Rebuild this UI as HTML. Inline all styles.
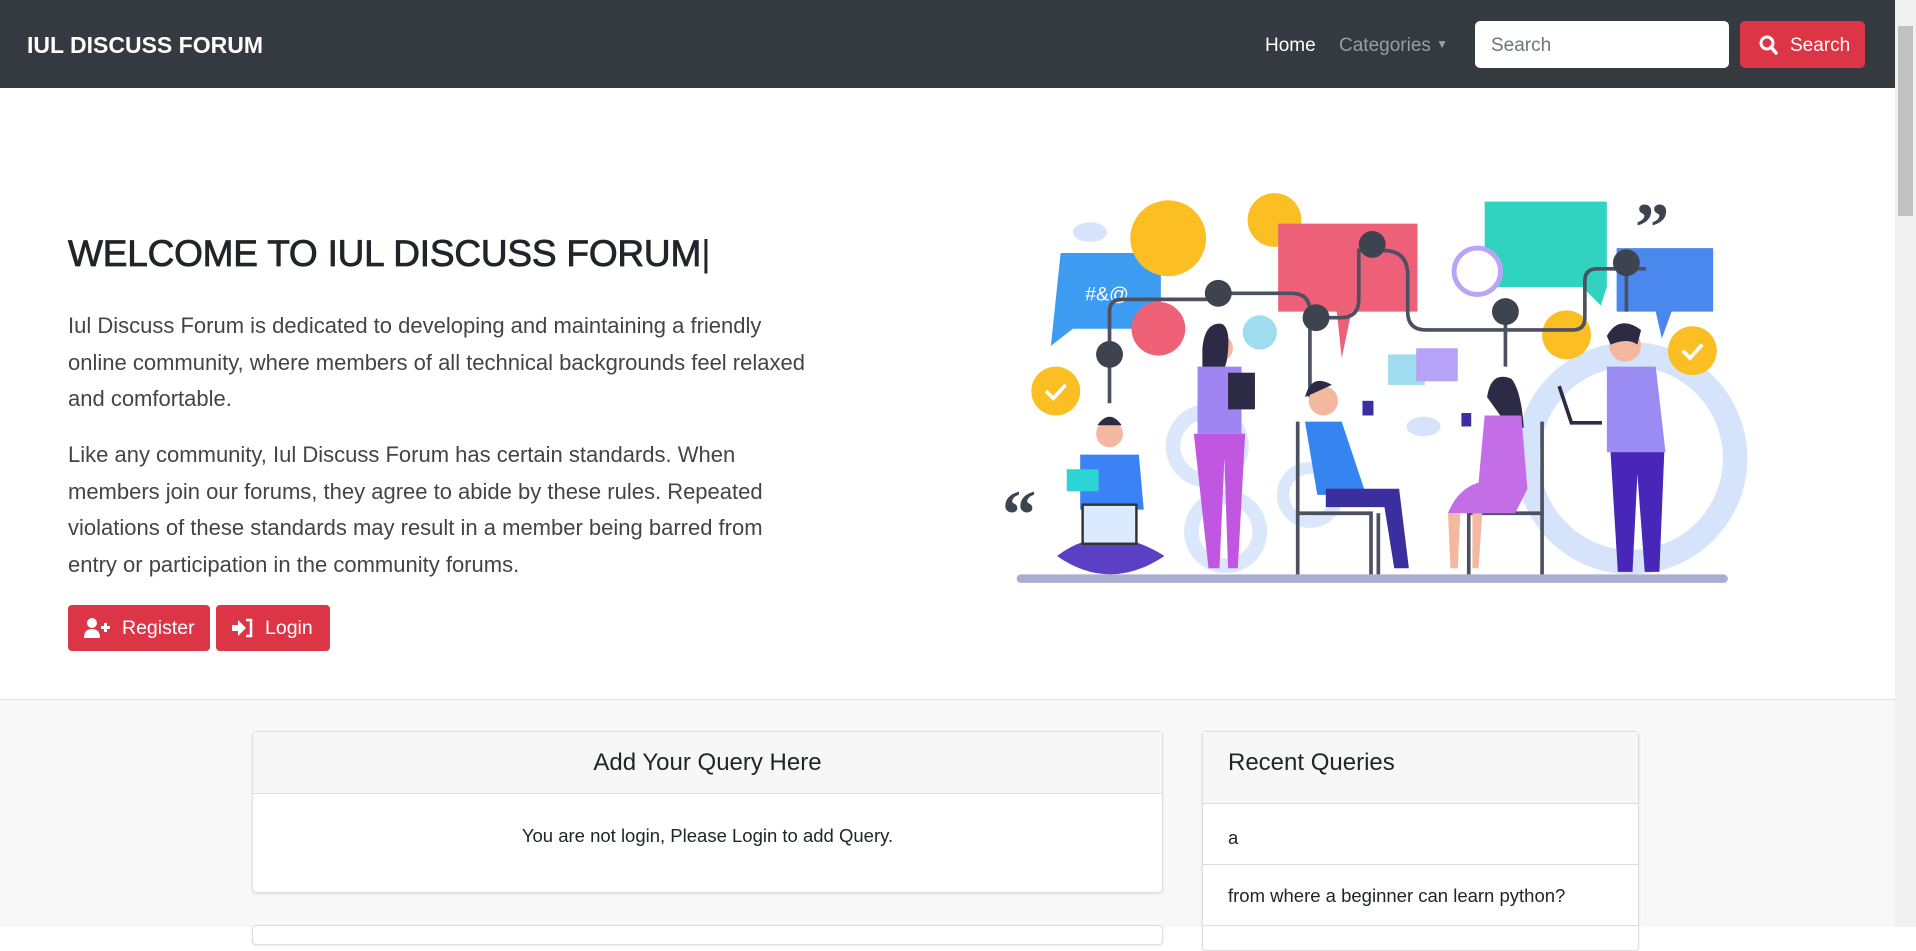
<!DOCTYPE html>
<html><head><meta charset="utf-8">
<style>
*{box-sizing:border-box;margin:0;padding:0}
html,body{width:1916px;height:927px;overflow:hidden;background:#fff;font-family:"Liberation Sans",sans-serif;color:#212529}
.nav{position:absolute;left:0;top:0;width:1895px;height:88px;background:#343a40}
.brand{position:absolute;left:27px;top:32px;color:#fff;font-weight:bold;font-size:23px}
.nl{position:absolute;top:35px;font-size:19px}
.inp{position:absolute;left:1475px;top:21px;width:254px;height:47px;background:#fff;border-radius:5px;color:#6c757d;font-size:19px;padding:14px 16px}
.sb{position:absolute;left:1740px;top:21px;width:125px;height:47px;background:#dc3545;border-radius:5px;color:#fff;font-size:19px;padding:14px 0 0 50px}
.scroll{position:absolute;left:1895px;top:0;width:21px;height:927px;background:#f1f1f1}
.thumb{position:absolute;left:1898px;top:26px;width:15px;height:190px;background:#c1c1c1}
h1{position:absolute;left:68px;top:233px;font-size:37px;font-weight:normal;letter-spacing:-0.2px;color:#212529;-webkit-text-stroke:0.8px #212529}
.p{position:absolute;left:68px;width:748px;font-size:22px;line-height:36.7px;color:#444;font-weight:normal}
.btn{position:absolute;top:605px;height:46px;background:#dc3545;border-radius:4px;color:#fff;font-size:19.5px;padding-top:12px}
.low{position:absolute;left:0;top:699px;width:1895px;height:228px;background:#f8f8f8;border-top:1px solid #dee2e6}
.card{position:absolute;background:#fff;border:1px solid #ddd;border-radius:4px;box-shadow:0 1px 3px rgba(0,0,0,.08)}
.ch{background:#f7f7f7;border-bottom:1px solid #ddd;font-size:24px;color:#212529}
</style></head><body>
<div class="nav">
<div class="brand">IUL DISCUSS FORUM</div>
<div class="nl" style="left:1265px;color:#fff">Home</div>
<div class="nl" style="left:1339px;color:#9a9da0">Categories <span style="font-size:12px;position:relative;top:-3px">&#9660;</span></div>
<div class="inp">Search</div>
<div class="sb"><svg style="position:absolute;left:19px;top:14px" width="19" height="20" viewBox="0 0 19 20"><circle cx="8" cy="8" r="6" fill="none" stroke="#fff" stroke-width="3"/><line x1="12" y1="12" x2="17" y2="18" stroke="#fff" stroke-width="3.5" stroke-linecap="round"/></svg>Search</div>
</div>
<div class="scroll"></div><div class="thumb"></div>
<h1>WELCOME TO IUL DISCUSS FORUM<span style="font-weight:normal;-webkit-text-stroke:0">|</span></h1>
<div class="p" style="top:308px">Iul Discuss Forum is dedicated to developing and maintaining a friendly online community, where members of all technical backgrounds feel relaxed and comfortable.</div>
<div class="p" style="top:437px">Like any community, Iul Discuss Forum has certain standards. When members join our forums, they agree to abide by these rules. Repeated violations of these standards may result in a member being barred from entry or participation in the community forums.</div>
<div class="btn" style="left:68px;width:142px;padding-left:54px"><svg style="position:absolute;left:16px;top:13px" width="26" height="20" viewBox="0 0 26 20"><circle cx="8" cy="5" r="5" fill="#fff"/><path d="M0 20 Q0 11 8 11 Q16 11 16 20Z" fill="#fff"/><path d="M17 8h3v-3h3v3h3v3h-3v3h-3v-3h-3z" fill="#fff"/></svg>Register</div>
<div class="btn" style="left:216px;width:114px;padding-left:49px"><svg style="position:absolute;left:16px;top:13px" width="22" height="20" viewBox="0 0 22 20"><path d="M0 7h6V2l8 8-8 8v-5H0z" fill="#fff"/><path d="M14 2h5v16h-5" fill="none" stroke="#fff" stroke-width="2.5"/></svg>Login</div>

<div class="low"></div>
<div class="card" style="left:252px;top:731px;width:911px;height:162px">
<div class="ch" style="height:62px;text-align:center;padding-top:17px">Add Your Query Here</div>
<div style="text-align:center;font-size:18.5px;padding-top:31px">You are not login, Please Login to add Query.</div>
</div>
<div class="card" style="left:252px;top:925px;width:911px;height:20px"></div>
<div class="card" style="left:1202px;top:731px;width:437px;height:220px">
<div class="ch" style="height:72px;padding:17px 0 0 25px">Recent Queries</div>
<div style="height:61px;border-bottom:1px solid #ddd;padding:23px 0 0 25px;font-size:18.5px">a</div>
<div style="height:61px;border-bottom:1px solid #ddd;padding:20px 0 0 25px;font-size:18.5px">from where a beginner can learn python?</div>
</div>

<svg style="position:absolute;left:0;top:0" width="1916" height="927" viewBox="0 0 1568 758.6">
<g fill="#d6e4fb">
<circle cx="1335" cy="375" r="85" fill="none" stroke="#d6e4fb" stroke-width="20"/>
<circle cx="988" cy="365" r="28" fill="none" stroke="#dbe7fb" stroke-width="12"/>
<circle cx="1072" cy="405" r="22" fill="none" stroke="#dbe7fb" stroke-width="10"/>
<circle cx="1003" cy="435" r="28" fill="none" stroke="#dbe7fb" stroke-width="12"/>
<ellipse cx="892" cy="190" rx="14" ry="8"/><ellipse cx="1165" cy="349" rx="14" ry="8"/>
</g>
<rect x="832" y="470" width="582" height="7" rx="3.5" fill="#a9aed0"/>
<path d="M868 207h82v62h-72l-18 14z" fill="#3d9bf2"/><text x="888" y="246" fill="#fff" font-size="16" font-family="Liberation Sans">#&amp;@</text>
<circle cx="956" cy="195" r="31" fill="#fbbf24"/>
<circle cx="1043" cy="180" r="22" fill="#fbbf24"/>
<path d="M1046 183h114v72h-54l-8 38-4-38h-48z" fill="#ee6077"/>
<path d="M1215 165h100v70l-5 15-15-15h-80z" fill="#2fd3c0"/>
<path d="M1323 203h79v52h-34l-8 22-5-22h-32z" fill="#4a88ee"/>
<circle cx="1209" cy="222" r="19" fill="#fff" stroke="#b8a5f5" stroke-width="4"/>
<text x="1338" y="205" font-size="56" font-weight="bold" fill="#3e4350" font-family="Liberation Serif">&#8221;</text>
<text x="820" y="440" font-size="56" font-weight="bold" fill="#3e4350" font-family="Liberation Serif">&#8220;</text>
<circle cx="864" cy="320" r="20" fill="#fbbf24"/><circle cx="1385" cy="287" r="20" fill="#fbbf24"/>
<path d="M856 320l6 6 10-11M1377 287l6 6 10-11" stroke="#fff" stroke-width="3" fill="none"/>
<circle cx="948" cy="269" r="22" fill="#ef6177"/><circle cx="1282" cy="274" r="20" fill="#fbbf24"/><circle cx="1031" cy="272" r="14" fill="#9fdcf0"/>
<rect x="1136" y="290" width="30" height="25" fill="#9fdcf0"/><rect x="1159" y="285" width="34" height="27" fill="#b6a2f6"/>
<path d="M908 330V255q0-10 10-10h70M997 240h60q15 0 15 15v70M1077 260h20q15 0 15-15v-40h20q20 0 20 20v30q0 15 15 15h120q10 0 10-10v-30q0-10 10-10h40M1232 255v45M1331 215v40" fill="none" stroke="#4b5161" stroke-width="3"/>
<g fill="#3e4350"><circle cx="997" cy="240" r="11"/><circle cx="1077" cy="260" r="11"/><circle cx="1232" cy="255" r="11"/><circle cx="1331" cy="215" r="11"/><circle cx="908" cy="290" r="11"/><circle cx="1123" cy="200" r="11"/></g>
<g stroke="#4b5161" stroke-width="3" fill="none"><path d="M1062 345v125M1062 420h60v50M1128 420v50M1262 345v125M1262 420h-60v50"/></g>
<circle cx="908" cy="355" r="11" fill="#f4b8a0"/><path d="M898 348q10-14 20 0z" fill="#2d2a45"/>
<path d="M884 372h48l4 45h-52z" fill="#3b82f6"/><path d="M865 455q40-30 88 0-45 30-88 0z" fill="#5b3fc4"/>
<rect x="886" y="413" width="44" height="32" fill="#dbeafe" stroke="#333" stroke-width="2"/>
<rect x="873" y="384" width="26" height="18" fill="#2dd4d4"/>
<circle cx="998" cy="285" r="11" fill="#f4b8a0"/><path d="M984 285q2-22 16-20 8 4 4 30l-10 35h-10z" fill="#2d2a45"/>
<path d="M980 300h36v55h-36z" fill="#9f85f2"/><path d="M977 355h42l-6 110h-8l-3-90-4 90h-9z" fill="#c156e0"/>
<rect x="1005" y="305" width="22" height="30" fill="#2d2a45"/>
<circle cx="1083" cy="328" r="12" fill="#f4b8a0"/><path d="M1068 325q5-20 22-10z" fill="#2d2a45"/>
<path d="M1068 345h30l20 60h-40z" fill="#3584f0"/><path d="M1085 400h60l8 65h-12l-8-50h-48z" fill="#3b2fa0"/>
<rect x="1115" y="328" width="9" height="12" fill="#3b2fa0"/>
<circle cx="1230" cy="322" r="11" fill="#f4b8a0"/><path d="M1217 325q3-22 20-15 8 10 10 40h-12z" fill="#2d2a45"/>
<path d="M1215 340h30l5 60-10 20h-55q8-20 25-25z" fill="#c36ee6"/><path d="M1185 420h10l-2 45h-6zM1205 420h8l-3 45h-5z" fill="#f4b8a0"/>
<rect x="1196" y="338" width="8" height="11" fill="#3b2fa0"/>
<circle cx="1330" cy="283" r="13" fill="#f4b8a0"/><path d="M1315 275q10-18 28-5l-3 12q-8-6-22 0z" fill="#2d2a45"/>
<path d="M1315 300h40l8 70h-48z" fill="#9b8cf4"/><path d="M1318 370h44l-4 98h-12l-6-80-4 80h-12z" fill="#4726b8"/>
<path d="M1276 316l10 30h25" stroke="#2d2a45" stroke-width="3" fill="none"/>
</svg>
</body></html>
